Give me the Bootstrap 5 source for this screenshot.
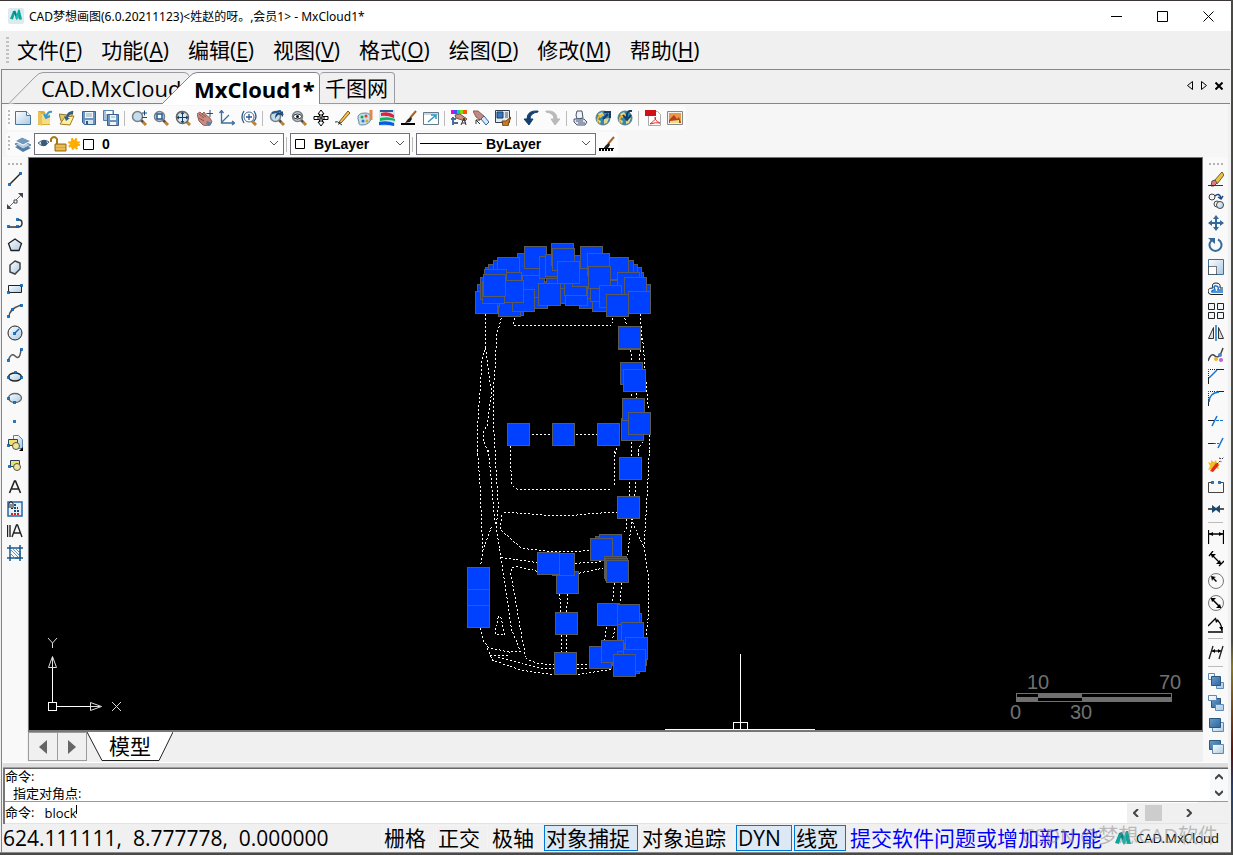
<!DOCTYPE html>
<html lang="zh-CN">
<head>
<meta charset="utf-8">
<meta name="viewport" content="width=device-width, initial-scale=1">
<title>CAD梦想画图 - MxCloud1*</title>
<link rel="stylesheet" href="https://cdn.jsdelivr.net/npm/bootstrap@5.3.0/dist/css/bootstrap.min.css">
<style>
:root{--face:#f0f0f0;--edge:#84848c;--ui:"Open Sans","Noto Sans CJK SC",sans-serif}
body{font-family:var(--ui);background:linear-gradient(#4c4a45,#4c4a45 75%,#8a7a20 78%,#5a1512 88%,#26406a 92%,#4c4a45);color:#000;font-size:13px;line-height:1;overflow:hidden}
.app-window{background:var(--face);margin:0 2px 2px 0;border-top:1px solid #3a3638;border-bottom:1px solid #888a90}
button{color:inherit}
svg{display:block;flex:none}
.titlebar{height:30px;font:12px "Noto Sans","Noto Sans CJK SC",sans-serif;background:#fff}
.titlebar span{margin-left:5px}
.caption-btn,.tool,.flat{border:0;background:none;padding:0;display:flex;align-items:center;justify-content:center;flex:none}
.caption-btn{width:46px;height:30px}
.menubar{height:38px;font-size:21px;padding-left:6px}
.menu-items{gap:19px;padding-left:8px}
.menubar a{color:#000;text-decoration:none;white-space:nowrap}
.menu-grip{width:3px;height:26px;background:repeating-linear-gradient(#c2c2c2 0 2px,transparent 2px 4px)}
.frame{border-left:1px solid var(--edge);margin-left:1px;padding-right:3px}
.doc-tabs{height:35px;border-top:1px solid var(--edge);border-bottom:1px solid var(--edge);margin:0 -2px 0 -1px;padding-top:2px}
.doc-tab{position:relative;isolation:isolate;height:32px;border:0;background:none;font-size:22px;line-height:30px;white-space:nowrap;padding:0;text-align:left}
.doc-tab svg{position:absolute;inset:0;z-index:0}
.doc-tab span{position:relative;z-index:1}
.tab-one{width:181px;margin-left:7px;padding-left:33px;margin-right:-27px}
.tab-two{width:158px;height:33px;font-weight:700;padding-left:32px}
.tab-three{width:75px;border:1px solid #9a9aa2;border-left:0;border-radius:4px 4px 0 0;padding-left:5px;font-size:21px}
.tab-tools{margin-right:3px}
.bars{background:#f6f6f6;padding:2px 0 0 4px;height:53px}
.bar{height:25px;background:#fbfbfb;width:max-content;border-radius:4px}
.bars .bar{height:24px;margin-bottom:2px}
.grip-v{width:2px;height:16px;margin:0 2px;background:repeating-linear-gradient(#bcbcbc 0 2px,transparent 2px 4px)}
.grip-h{height:2px;width:14px;margin:6px 0 3px;background:repeating-linear-gradient(90deg,#b4b4b4 0 2px,transparent 2px 4px)}
.tool{width:22px;height:22px}
.tool:hover{background:#d8e8f8}
.sep-v{width:1px;height:15px;background:#bcbcbc;margin:0 3px 0 2px}
.sep-h{height:1px;width:15px;background:#bcbcbc;margin:2px 0 3px}
.combo{height:22px;border:1px solid #70707a;background:#fff;position:relative;padding-left:3px}
.combo select{appearance:none;border:0;background:none;font:bold 14px "Liberation Sans","Noto Sans CJK SC",sans-serif;padding:0;flex:1;min-width:0;height:20px;color:#000;outline:0}
.combo .chev{position:absolute;right:4px;top:6px;pointer-events:none}
.combo-layer{width:250px}.combo-color{width:120px}.combo-line{width:180px}
.palette{width:25px;background:#f9f9f9;flex:none;margin-right:1px}
.palette.end{margin-right:0}
.canvas{background:#000;border:1px solid #77777b;border-bottom-width:2px;overflow:hidden;position:relative;min-height:0}
.canvas>svg{position:absolute}
.scale-bar{right:9px}
.sheet-tabs{height:30px}
.nav-btn{width:30px;height:29px;border:1px solid #9c9c9c;background:var(--face);padding:0;display:flex;align-items:center;justify-content:center}
.nav-btn+.nav-btn{margin-left:-1px}
.sheet{position:relative;width:86px;height:29px;border:0;background:none;font-size:21px;padding:0}
.sheet svg{position:absolute;inset:0}.sheet span{position:relative}
.splitter{height:6px;background:#dedede;border-top:1px solid #fff;border-bottom:1px solid #a0a0a0;margin-left:1px}
.command{background:#fff;border-left:2px solid #77777b;border-top:1px solid #666;margin-left:1px;font-size:13px}
.log{height:33px;border-bottom:1px solid #999}
.log p{margin:0;line-height:14px;height:17px;white-space:nowrap}
.prompt{height:22px;border-bottom:1px solid #e3e3e3}
.prompt input{border:0;outline:0;padding:0;margin-left:10px;background:none;font:13px "Open Sans",sans-serif;width:34px;min-width:0}
.caret{width:1px;height:9px;background:#000;margin:-6px 0 0 -2px}
.scroll-x{width:71px;background:var(--face);height:20px}
.scroll-end{width:30px;background:var(--face)}
.thumb{width:17px;height:16px;background:#cdcdcd}
.scroll-x .flat,.scroll-y .flat{width:18px;height:16px}
.statusbar{height:28px;font-size:21px;padding:1px 1px 1px 0}
.coords{width:376px;margin-left:1px;line-height:24px;white-space:pre}
.snaps{gap:2px;margin-left:3px}
.snap{height:26px;border:1px solid #f4f4f4;background:none;padding:0 7px 0 1px;line-height:24px;white-space:nowrap;flex:none;text-align:left}
.snap.on{background:#dce9f5;border-color:#0078d7}
.snap-dyn{width:56px}
.report{color:#00f;text-decoration:none;white-space:nowrap;line-height:24px}
.brand-name{font:13px/16px "Open Sans",sans-serif}
.watermark{position:absolute;right:10px;top:0;color:#8888;font-size:20px;line-height:24px;white-space:nowrap;pointer-events:none}
</style>
<script src="https://cdn.jsdelivr.net/npm/bootstrap@5.3.0/dist/js/bootstrap.bundle.min.js"></script>
</head>
<body class="vh-100 d-flex flex-column">
<svg width="0" height="0" class="position-absolute" aria-hidden="true">
<defs>
<linearGradient id="sky" x2="1" y2="1"><stop stop-color="#fff"/><stop offset="1" stop-color="#a9c9e4"/></linearGradient>
<linearGradient id="deep" x2="1" y2="1"><stop stop-color="#6d9bc7"/><stop offset="1" stop-color="#2c659e"/></linearGradient>
<symbol id="lens" viewBox="0 0 16 16"><path d="M10 10l5 5" stroke="#c08030" stroke-width="3"/><path d="M10 10l2 2" stroke="#444" stroke-width="2"/><circle cx="6.500" cy="6.500" r="5" fill="#c5dcec" stroke="#777f86" stroke-width="1.500"/></symbol>
<symbol id="down" viewBox="0 0 10 6"><path d="M1 1l4 4 4-4" fill="none" stroke="#555"/></symbol>
<symbol id="globe" viewBox="0 0 16 16"><circle cx="8" cy="8" r="7" fill="#3186b8" stroke="#5b7e83"/><path d="M3 4l4-2 2 3-4 3zM9 9l5-1-2 5-3 1zM2 9l4 2-1 3z" fill="#e5d68c"/><path d="M3 13Q1 5 9 5" fill="none" stroke="#f4b71e" stroke-width="1.500"/></symbol>
<symbol id="brush" viewBox="0 0 16 16"><path d="M15 1L9 8" stroke="#a5632b" stroke-width="2"/><path d="M10 7l-3 2-3 4 5-1 2-3z" fill="#222"/></symbol>
<symbol id="drop" viewBox="0 0 4 4"><path d="M.5.500h3v3h-3z" fill="#0c86e8" stroke="#05529c"/></symbol>
<symbol id="logo" viewBox="0 0 16 16"><path d="M0 13L4 3l3 1-3 10z" fill="#0aa69c"/><path d="M4 3l3-1 3 7-2 3z" fill="#09808a"/><path d="M7 12l4-11 2 1-2 10-2 3z" fill="#12bdb0"/><path d="M11 1h2l3 13h-4l-1-4z" fill="#0aa69c"/></symbol>
</defs>
</svg>
<div class="app-window d-flex flex-column flex-grow-1" style="min-height:0">
<header class="titlebar d-flex align-items-center ps-2">
 <svg width="16" height="16"><rect width="16" height="16" rx="2" fill="#dcebed"/><use href="#logo" x="2" y="1" width="12" height="12"/></svg>
 <span class="text-nowrap">CAD梦想画图(6.0.20211123)&lt;姓赵的呀。,会员1&gt; - MxCloud1*</span>
 <div class="ms-auto d-flex">
 <button class="caption-btn" aria-label="最小化"><svg width="11" height="11"><path d="M0 5.500h11" stroke="#000"/></svg></button>
 <button class="caption-btn" aria-label="最大化"><svg width="11" height="11"><path d="M.5.500h10v10H.5z" fill="none" stroke="#000"/></svg></button>
 <button class="caption-btn" aria-label="关闭"><svg width="11" height="11"><path d="M.5.500l10 10M10.500.500l-10 10" stroke="#000"/></svg></button>
 </div>
</header>
<nav class="menubar d-flex align-items-center" aria-label="主菜单">
 <span class="menu-grip"></span>
 <div class="menu-items d-flex"><a href="#">文件(<u>F</u>)</a><a href="#">功能(<u>A</u>)</a><a href="#">编辑(<u>E</u>)</a><a href="#">视图(<u>V</u>)</a><a href="#">格式(<u>O</u>)</a><a href="#">绘图(<u>D</u>)</a><a href="#">修改(<u>M</u>)</a><a href="#">帮助(<u>H</u>)</a></div>
</nav>
<div class="frame d-flex flex-column flex-grow-1" style="min-height:0">
<div class="doc-tabs d-flex align-items-start" role="tablist">
 <button class="doc-tab tab-one" role="tab" aria-selected="false"><svg width="181" height="32"><path d="M.5 32L27 5Q31 .5 35 .5H176Q180 .5 181 4" fill="#f0f0f0" stroke="#9a9aa2"/></svg><span>CAD.MxCloud</span></button>
 <button class="doc-tab tab-two" role="tab" aria-selected="true"><svg width="158" height="33"><path d="M0 32L27 5Q31 .5 35 .5H153Q157.500.500 157.500 5V33H0z" fill="#fff"/><path d="M0 32L27 5Q31 .5 35 .5H153Q157.500.500 157.500 5V32" fill="none" stroke="#84848c"/></svg><span>MxCloud1*</span></button>
 <button class="doc-tab tab-three" role="tab" aria-selected="false"><span>千图网</span></button>
 <div class="tab-tools ms-auto d-flex align-self-center mb-1">
 <button class="flat px-1" aria-label="上一个"><svg width="6" height="9"><path d="M5.500.500v8l-5-4z" fill="none" stroke="#000"/></svg></button>
 <button class="flat px-1" aria-label="下一个"><svg width="6" height="9"><path d="M.5.500v8l5-4z" fill="none" stroke="#000"/></svg></button>
 <button class="flat px-1" aria-label="关闭文档"><svg width="8" height="8"><path d="M.5.500l7 7M7.500.500l-7 7" stroke="#000" stroke-width="2"/></svg></button>
 </div>
</div>
<div class="bars">
 <div class="bar d-flex align-items-center" role="toolbar" aria-label="标准">
 <span class="grip-v"></span>
 <button class="tool" aria-label="新建"><svg width="16" height="16"><path d="M.5 1.500h11l4 4v9H.5z" fill="url(#sky)" stroke="#47749b"/><path d="M11.500 1.500v4h4" fill="#fff" stroke="#47749b"/></svg></button>
 <button class="tool" aria-label="打开"><svg width="16" height="16"><path d="M1 1h6l2 3h4v11H1z" fill="#d5ad3c"/><path d="M4 4h9v10H4z" fill="#f7dc81"/><path d="M1 1l4 3v12l-4-2z" fill="#ecc25b"/><path d="M15 2q-4-1-6 5M7 4l2 4 4-2" fill="none" stroke="#3999cc" stroke-width="2"/></svg></button>
 <button class="tool" aria-label="打开网络文件"><svg width="16" height="16"><path d="M0 4l8 1 6-4-3 13H3z" fill="#e9c759" stroke="#8c7432"/><path d="M1 14l5-7 9-1-4 9z" fill="#fff1a3" stroke="#a38027"/><path d="M14 1q-6 0-7 6l-2-1 2 5 4-3H9q1-4 5-4zM8 13l6 2" fill="#315e84"/></svg></button>
 <button class="tool" aria-label="保存"><svg width="16" height="16"><path d="M1.500 1.500h13v13h-11l-2-2z" fill="#6995c0" stroke="#39638f"/><path d="M4 2h8v6H4z" fill="#eef5fb"/><path d="M5 4h6M5 6h6" stroke="#91a9bd"/><path d="M4 10h8v4H4z" fill="#d8e4ec"/><path d="M5 11h2v3H5z" fill="#305a82"/></svg></button>
 <button class="tool" aria-label="另存为"><svg width="16" height="16"><path d="M.5.500h10v10H.5z" fill="#a5c1da" stroke="#537ea6"/><path d="M3 1h6v3H3z" fill="#fff"/><path d="M4.500 4.500h11v11h-11z" fill="#6995c0" stroke="#39638f"/><path d="M7 5h6v5H7zM7 12h6v3H7z" fill="#eef5fb"/><path d="M8 7h4" stroke="#91a9bd"/></svg></button>
 <span class="sep-v"></span>
 <button class="tool" aria-label="实时缩放"><svg width="16" height="16"><use href="#lens"/><path d="M11 3h5M13.500.500v5M11 7.500h5" stroke="#174a79"/></svg></button>
 <button class="tool" aria-label="窗口缩放"><svg width="16" height="16"><use href="#lens"/><path d="M4 4h5v5H4z" fill="#fff" stroke="#225b94" stroke-width="1.500"/></svg></button>
 <button class="tool" aria-label="全部缩放"><svg width="16" height="16"><use href="#lens"/><circle cx="7.500" cy="7.500" r="6" fill="#dbe8f0" stroke="#666" stroke-width="1.500"/><path d="M7.500 2.500v10M2.500 7.500h10M6 4l1.500-2L9 4M6 11l1.500 2L9 11M4 6L2 7.500 4 9M11 6l2 1.500L11 9" fill="none" stroke="#183c60"/></svg></button>
 <button class="tool" aria-label="平移"><svg width="16" height="16"><path d="M0 4l3-2 2 2 2-2 2 3 4 3 2 4-4 4-5-1-4-4z" fill="#c98c82" stroke="#98605a"/><path d="M2 4l5 4M5 4l4 3M2 8l5 3" stroke="#8e4e4a"/><path d="M13 0v7M9.500 3.500h6.500" stroke="#214d79"/><path d="M10 11l5 2-2 3-4-2z" fill="#607fa0"/></svg></button>
 <button class="tool" aria-label="坐标系"><svg width="16" height="16"><path d="M2.500 1v12H15M.5 3l2-2.500 2 2.500M13 11l2.500 2-2.500 2M3 12l7-7" fill="none" stroke="#3e719f" stroke-width="1.300"/></svg></button>
 <button class="tool" aria-label="动态缩放"><svg width="16" height="16"><path d="M11 11l4 4" stroke="#c08030" stroke-width="3"/><circle cx="8" cy="7" r="5" fill="#fff" stroke="#496e91"/><path d="M8 4v6M5 7h6M3 1Q-1 7 3 13M13 1q4 6 0 10" fill="none" stroke="#2c5a87" stroke-width="1.300"/></svg></button>
 <span class="sep-v"></span>
 <button class="tool" aria-label="上一视图"><svg width="16" height="16"><use href="#lens"/><path d="M14 1v6l-2-2q-3-2-6 4 0-8 6-6z" fill="#1c426c"/><path d="M3 3l8-2 3 4" fill="none" stroke="#245787" stroke-width="2"/></svg></button>
 <button class="tool" aria-label="查看对象"><svg width="16" height="16"><use href="#lens"/><ellipse cx="6.500" cy="6.500" rx="4" ry="2.500" fill="#fff" stroke="#333"/><circle cx="6.500" cy="6.500" r="1.500" fill="#111"/></svg></button>
 <button class="tool" aria-label="移动视图"><svg width="16" height="16"><path d="M8 0l3 4H9.500v2.500H15v3H9.500V12H11l-3 4-3-4h1.500V9.500H1v-3h5.500V4H5z" fill="#fff" stroke="#000"/><path d="M8 4v8M4 8h8" stroke="#000"/></svg></button>
 <button class="tool" aria-label="铅笔"><svg width="16" height="16"><path d="M4 12L13 1l2 2L6 13z" fill="#f3c34b" stroke="#80551f"/><path d="M0 12q3-1 4 1l3 2" fill="none" stroke="#333"/><path d="M4 12l-1 3 3-2z" fill="#333"/></svg></button>
 <button class="tool" aria-label="调色板"><svg width="16" height="16"><path d="M1 9Q0 3 8 3q6 0 6 5-1 7-9 7-4 0-3-3z" fill="#c7dfe9" stroke="#668a9b"/><circle cx="5" cy="7" r="1.500" fill="#16a34a"/><circle cx="9" cy="6" r="1.500" fill="#e53535"/><circle cx="6" cy="11" r="1.500" fill="#247bd3"/><circle cx="10" cy="11" r="1.500" fill="#dda727"/><path d="M14 0v10" stroke="#d98b54" stroke-width="3"/></svg></button>
 <button class="tool" aria-label="图层颜色"><svg width="16" height="16"><path d="M0 0h16v16H0z" fill="#d6e5ed"/><path d="M1 0h13v2H1z" fill="#275d98"/><path d="M2 3q8-2 13 2v3Q8 5 2 6z" fill="#e31e3f"/><path d="M1 8q9-2 15 1v2q-7-2-15 0z" fill="#0bb85b"/><path d="M0 12q8-2 15 1v3q-7-2-15-1z" fill="#075ce3"/></svg></button>
 <button class="tool" aria-label="线宽设置"><svg width="16" height="16"><use href="#brush"/><path d="M0 14h14" stroke="#000" stroke-width="2"/></svg></button>
 <button class="tool" aria-label="全屏"><svg width="16" height="16"><path d="M.5 2.500h15v12H.5z" fill="#fff" stroke="#667986"/><path d="M1 3h14v2H1z" fill="#c9d7df"/><path d="M5 12l7-6M8 5h5v4" fill="none" stroke="#2699cf" stroke-width="1.500"/></svg></button>
 <span class="sep-v"></span>
 <button class="tool" aria-label="特性"><svg width="16" height="16"><path d="M0 0h3v4H0z" fill="#f0c"/><path d="M3 0h3v4H3z" fill="#35f"/><path d="M6 0h3v4H6z" fill="#0cc"/><path d="M9 0h3v4H9z" fill="#8d0"/><path d="M12 0h4v4h-4z" fill="#f50"/><path d="M4 5l5-1 7 5-2 2-9-3z" fill="#c69182" stroke="#835244"/><path d="M2 7v8M0 9h5M1 13h6" stroke="#4b6f94" stroke-width="2"/><path d="M10 15l3-7 2 7M11 13h4" fill="none" stroke="#333"/></svg></button>
 <button class="tool" aria-label="快速选择"><svg width="16" height="16"><path d="M0 1l5 0 6 5-4 4-4-3z" fill="#c08a84" stroke="#84635b"/><path d="M8 9l3-3 5 6-3 3z" fill="#d4e8f7" stroke="#326695"/><path d="M3 10l4 4M3 14v-4h4" fill="none" stroke="#333"/></svg></button>
 <button class="tool" aria-label="设计中心"><svg width="16" height="16"><path d="M.5.500h14v12H.5z" fill="#dfeaf2" stroke="#333f50"/><path d="M2 2h6v6H2z" fill="#3579ba" stroke="#173d66"/><path d="M10 3h3M10 5h3M10 7h3" stroke="#555"/><path d="M16 7l-5 4-4 0 1 5h5l1-4z" fill="#c77927" stroke="#744414"/></svg></button>
 <span class="sep-v"></span>
 <button class="tool" aria-label="撤销"><svg width="16" height="16"><path d="M15 1Q4 0 4 9H1l5 6 4-6H7q0-6 8-7z" fill="#133f6d" stroke="#133f6d"/></svg></button>
 <button class="tool" aria-label="重做"><svg width="16" height="16"><path d="M1 1q11-1 11 8h3l-5 6-4-6h3q0-6-8-7z" fill="#b9b9b9" stroke="#b9b9b9"/></svg></button>
 <span class="sep-v"></span>
 <button class="tool" aria-label="打印"><svg width="16" height="16"><path d="M4 1h5l1 7-6 1-1-4z" fill="#f2f4f8" stroke="#46546f"/><path d="M1 9h10l3 3-2 3H4l-3-3z" fill="#dfe5f0" stroke="#46546f"/><path d="M3 11h7M5 13h7" stroke="#46546f"/></svg></button>
 <button class="tool" aria-label="上传"><svg width="16" height="16"><use href="#globe"/><path d="M8 9l5-5M9 2h6v6" fill="none" stroke="#163d64" stroke-width="2"/></svg></button>
 <button class="tool" aria-label="下载"><svg width="16" height="16"><use href="#globe"/><path d="M15 1q-6-1-5 7M6 5l4 5 4-5" fill="none" stroke="#163d64" stroke-width="2"/></svg></button>
 <span class="sep-v"></span>
 <button class="tool" aria-label="输出PDF"><svg width="16" height="16"><path d="M3.500 1.500h9l3 3v11h-12z" fill="#fff" stroke="#aaa"/><path d="M0 0h11v6H0z" fill="#cf1117"/><path d="M5 14q8-6 5-7-1 3 5 6-4-1-10 1" fill="none" stroke="#dc3037"/></svg></button>
 <button class="tool" aria-label="输出图片"><svg width="16" height="16"><path d="M.5 1.500h15v13H.5z" fill="#f3f3f3" stroke="#888"/><path d="M2 3h12v10H2z" fill="#e79b42"/><path d="M2 10l5-5 3 4 2-2 2 6H2z" fill="#b83e22"/><path d="M3 11l9-1v3H3z" fill="#eddf86"/></svg></button>
 </div>
 <div class="bar d-flex align-items-center" role="toolbar" aria-label="图层和特性">
 <span class="grip-v"></span>
 <button class="tool" aria-label="图层管理"><svg width="16" height="16"><path d="M0 11l7-3 9 4-8 4z" fill="#517da5"/><path d="M0 8l7-3 9 4-8 4z" fill="#b8cedd" stroke="#517da5"/><path d="M0 5l7-4 9 4-8 4z" fill="#7299bd" stroke="#fff"/></svg></button>
 <div class="combo combo-layer d-flex align-items-center">
 <svg width="60" height="16"><path d="M0 7q6-5 11-1-5 7-11 1z" fill="#d0e2ec" stroke="#55667a"/><circle cx="6" cy="7" r="3" fill="#345b7c"/><path d="M13 6V3q3-4 6 0v5" fill="none" stroke="#a77818" stroke-width="2"/><path d="M17 8h11v7H17z" fill="#d9a735" stroke="#9b6c13"/><path d="M18 10h9M18 13h9" stroke="#f2d179"/><circle cx="36" cy="8" r="5" fill="none" stroke="#f9a800" stroke-width="2" stroke-dasharray="2 2"/><circle cx="36" cy="8" r="4.500" fill="#ffae00"/><path d="M45.500 3.500h10v10h-10z" fill="#fff" stroke="#000"/></svg>
 <select aria-label="图层" class="ps-1"><option>0</option></select><svg class="chev" width="10" height="8"><use href="#down" width="10" height="6"/></svg></div>
 <span class="sep-v"></span>
 <div class="combo combo-color d-flex align-items-center"><svg width="12" height="12"><path d="M1.500 1.500h9v9h-9z" fill="#fff" stroke="#000"/></svg>
 <select aria-label="颜色" class="ps-2"><option>ByLayer</option></select><svg class="chev" width="10" height="8"><use href="#down" width="10" height="6"/></svg></div>
 <span class="sep-v"></span>
 <div class="combo combo-line d-flex align-items-center"><svg width="62" height="2"><path d="M0 .5h62" stroke="#000"/></svg>
 <select aria-label="线型" class="ps-1"><option>ByLayer</option></select><svg class="chev" width="10" height="8"><use href="#down" width="10" height="6"/></svg></div>
 <button class="tool" aria-label="线型管理"><svg width="16" height="16"><use href="#brush"/><path d="M0 12.500h15" stroke="#000"/><path d="M0 14h15" stroke="#000" stroke-width="2" stroke-dasharray="2 1"/></svg></button>
 </div>
</div>
<main class="d-flex flex-grow-1" style="min-height:0">
 <div class="palette d-flex flex-column align-items-center" role="toolbar" aria-label="绘图">
 <span class="grip-h"></span>
 <button class="tool" aria-label="直线"><svg width="16" height="16"><path d="M2 14L14 2" stroke="#222" stroke-width="1.500"/><use href="#drop" x="1" y="12" width="3" height="3"/><use href="#drop" x="12" y="1" width="3" height="3"/></svg></button>
 <button class="tool" aria-label="构造线"><svg width="16" height="16"><path d="M2 14L14 2" stroke="#667"/><path d="M0 16v-5l5 5zM16 0h-5l5 5z" fill="#445"/><path d="M7 7h3v3H7z" fill="#fff" stroke="#445"/></svg></button>
 <button class="tool" aria-label="多段线"><svg width="16" height="16"><path d="M1 12h10q4 0 4-4t-5-3" fill="none" stroke="#333" stroke-width="1.500"/><use href="#drop" y="10" width="3" height="3"/><use href="#drop" x="9" y="10" width="3" height="3"/><use href="#drop" x="9" y="3" width="3" height="3"/></svg></button>
 <button class="tool" aria-label="正多边形"><svg width="16" height="16"><path d="M8 2l6.500 4.500-2.500 7H4L1.500 6.500z" fill="url(#sky)" stroke="#222" stroke-width="1.300"/></svg></button>
 <button class="tool" aria-label="多边形"><svg width="16" height="16"><path d="M8 2l5 2v6l-5 5-5-2 0-7z" fill="url(#sky)" stroke="#444" stroke-width="1.500"/></svg></button>
 <button class="tool" aria-label="矩形"><svg width="16" height="16"><path d="M1.500 4.500h13v7h-13z" fill="url(#sky)" stroke="#222"/><use href="#drop" y="10" width="3" height="3"/><use href="#drop" x="13" y="3" width="3" height="3"/></svg></button>
 <button class="tool" aria-label="圆弧"><svg width="16" height="16"><path d="M2 14Q2 6 14 2" fill="none" stroke="#555" stroke-width="1.500"/><use href="#drop" y="12" width="3" height="3"/><use href="#drop" x="4" y="5" width="3" height="3"/><use href="#drop" x="13" y="1" width="3" height="3"/></svg></button>
 <button class="tool" aria-label="圆"><svg width="16" height="16"><circle cx="8" cy="8" r="7" fill="url(#sky)" stroke="#222"/><path d="M8 8l4-4" stroke="#16c" stroke-width="1.500"/><use href="#drop" x="6" y="7" width="3" height="3"/></svg></button>
 <button class="tool" aria-label="样条曲线"><svg width="16" height="16"><path d="M1 14q3-9 7-5 5 5 6-7" fill="none" stroke="#555" stroke-width="1.500"/><use href="#drop" y="12" width="3" height="3"/><use href="#drop" x="13" y="1" width="3" height="3"/></svg></button>
 <button class="tool" aria-label="椭圆"><svg width="16" height="16"><ellipse cx="8" cy="8" rx="6.500" ry="4" fill="url(#sky)" stroke="#222" stroke-width="1.300"/><use href="#drop" y="7" width="3" height="3"/><use href="#drop" x="7" y="2" width="3" height="3"/><use href="#drop" x="13" y="7" width="3" height="3"/></svg></button>
 <button class="tool" aria-label="椭圆弧"><svg width="16" height="16"><ellipse cx="8" cy="7" rx="6.500" ry="4.500" fill="url(#sky)" stroke="#666" stroke-width="1.300"/><use href="#drop" y="6" width="3" height="3"/><use href="#drop" x="6" y="10" width="3" height="3"/></svg></button>
 <button class="tool" aria-label="点"><svg width="16" height="16"><use href="#drop" x="6" y="7" width="3" height="3"/></svg></button>
 <button class="tool" aria-label="插入块"><svg width="16" height="16"><path d="M6.500.500h5l4 4v9h-9z" fill="url(#sky)" stroke="#5481ad"/><path d="M1.500 4.500h9v6h-9z" fill="#f4df6e" stroke="#24435c"/><circle cx="9" cy="11" r="3.500" fill="#eee49c" stroke="#555"/><use href="#drop" y="9" width="3" height="3"/><path d="M16 12v4h-4z"/></svg></button>
 <button class="tool" aria-label="创建块"><svg width="16" height="16"><path d="M3.500 3.500h9v6h-9z" fill="#f4df6e" stroke="#24435c"/><circle cx="10" cy="10" r="3.500" fill="#eee49c" stroke="#555"/><use href="#drop" x="1" y="8" width="3" height="3"/></svg></button>
 <button class="tool" aria-label="单行文字"><svg width="16" height="16"><path d="M2.500 14L7.500 2h1l5 12M5 10h7" fill="none" stroke="#222" stroke-width="1.600"/></svg></button>
 <button class="tool" aria-label="图案"><svg width="16" height="16"><path d="M1 1h14v14H1z" fill="#e6f0f8" stroke="#2668a6" stroke-width="1.500"/><path d="M4 13h9" stroke="#d31c24" stroke-width="2" stroke-dasharray="2 1"/><path d="M7 4h2M7 7h4M7 10h6" stroke="#1c4b70" stroke-width="2" stroke-dasharray="2 1"/><path d="M2 7V2q2-3 4 0v5q-1 2-2 0V3" fill="none" stroke="#222"/></svg></button>
 <button class="tool" aria-label="多行文字"><svg width="16" height="16"><path d="M.5 2v12M3 2v12M5 14l4.500-12h1L15 14M7 10h7" fill="none" stroke="#222" stroke-width="1.400"/></svg></button>
 <button class="tool" aria-label="填充"><svg width="16" height="16"><path d="M3 0v16M13 0v16M0 3h16M0 13h16" stroke="#1d588d" stroke-width="1.500"/><path d="M3 4l9 9M6 4l6 6M9 4l4 4M3 8l5 5" stroke="#5c98ca"/><path d="M13 6v7h-5" fill="none" stroke="#1d588d"/></svg></button>
 </div>
 <section class="d-flex flex-column flex-grow-1" style="min-width:0">
 <div class="canvas flex-grow-1">
 <svg class="top-0 start-0" width="100%" height="100%" shape-rendering="crispEdges" role="img" aria-label="汽车俯视图">
 <defs><rect id="g" x=".5" y=".5" width="22" height="22" fill="#0040ff" stroke="#5b5b5b"/></defs>
 <g transform="translate(-29 -158)">
 <g fill="none" stroke="#fff" stroke-width="3" stroke-dasharray="6 6">
 <path transform="translate(460 235) scale(.33333)" d="M77 236L76 340 66 372 60 470 52 580V660M77 340L90 440 95 470 82 570 70 590 72 620 85 655M124 250L110 300 105 400 100 470V560L106 655M163 250L160 273H205L300 271H410L452 273 458 262V244M151 632V660M469 640L466 660M205 598H410M494 250L500 270M512 345L516 380M516 478V490M541 237L545 300 537 380M530 475V490M548 310L560 460 565 525M568 600V660M514 620V660M548 620L537 640V660"/>
 <path transform="translate(460 450) scale(.33333)" d="M52 0L60 100 65 230 69 300 62 345M85 0L92 70 103 200 106 225M106 0L108 60 115 170 112 200 108 230 130 370 155 540 182 605M151 0L154 95Q158 115 175 118H445Q462 115 465 95V0M568 0L563 110 556 230 552 290 565 380V500L558 560M514 0V20M537 0V20M508 95V140M528 95L524 140M516 205L520 225 552 290M516 205L514 230 508 270 503 315M499 208V240L485 252M463 400L458 460M485 400L480 460M440 530L434 570M465 535L458 565M133 187L190 190 260 196H340L400 190 470 187M124 195L122 240 185 295 270 304 330 306 390 301M95 230L69 300M122 322L232 338M232 364L170 349 154 355 152 370 165 440 180 530 197 622M345 340L430 335M345 372L430 354M299 432L303 487M323 432L320 487M305 555V607M320 555L318 607M115 500L107 540V555H135L122 500H115M62 535L68 570 85 592 140 605H182M82 595L97 630 180 660 270 673H360L460 657M90 618H140L150 605M115 622L240 655H283M350 656H400M197 625L230 640 283 645M350 645L390 642"/>
 </g>
 <use href="#g" x="485" y="267"/><use href="#g" x="488" y="264"/><use href="#g" x="493" y="260"/><use href="#g" x="508" y="266"/><use href="#g" x="525" y="286"/><use href="#g" x="501" y="293"/><use href="#g" x="543" y="281"/><use href="#g" x="546" y="266"/><use href="#g" x="600" y="262"/><use href="#g" x="621" y="272"/><use href="#g" x="619" y="267"/><use href="#g" x="615" y="264"/><use href="#g" x="611" y="260"/><use href="#g" x="560" y="255"/><use href="#g" x="579" y="286"/><use href="#g" x="592" y="289"/><use href="#g" x="577" y="276"/><use href="#g" x="565" y="283"/><use href="#g" x="564" y="273"/><use href="#g" x="572" y="264"/><use href="#g" x="590" y="279"/><use href="#g" x="602" y="280"/>
 <use href="#g" x="517" y="253"/><use href="#g" x="497" y="257"/><use href="#g" x="522" y="275"/><use href="#g" x="524" y="246"/><use href="#g" x="539" y="256"/><use href="#g" x="545" y="254"/><use href="#g" x="551" y="243"/><use href="#g" x="552" y="248"/><use href="#g" x="557" y="261"/><use href="#g" x="538" y="283"/>
 <use href="#g" x="580" y="246"/><use href="#g" x="606" y="257"/><use href="#g" x="587" y="253"/><use href="#g" x="588" y="266"/><use href="#g" x="617" y="272"/><use href="#g" x="628" y="284"/><use href="#g" x="624" y="277"/><use href="#g" x="599" y="285"/><use href="#g" x="606" y="294"/><use href="#g" x="628" y="291"/>
 <use href="#g" x="498" y="294"/><use href="#g" x="512" y="289"/><use href="#g" x="477" y="284"/><use href="#g" x="475" y="291"/><use href="#g" x="480" y="277"/><use href="#g" x="499" y="272"/><use href="#g" x="484" y="269"/><use href="#g" x="501" y="280"/><use href="#g" x="482" y="281"/><use href="#g" x="483" y="274"/>
 <use href="#g" x="618" y="327"/><use href="#g" x="618" y="326"/><use href="#g" x="620" y="362"/><use href="#g" x="623" y="369"/><use href="#g" x="621" y="418"/><use href="#g" x="622" y="398"/><use href="#g" x="628" y="412"/><use href="#g" x="507" y="423"/><use href="#g" x="552" y="423"/><use href="#g" x="597" y="423"/>
 <use href="#g" x="619" y="457"/><use href="#g" x="617" y="496"/><use href="#g" x="595" y="536"/><use href="#g" x="599" y="534"/><use href="#g" x="590" y="538"/><use href="#g" x="604" y="556"/><use href="#g" x="605" y="558"/><use href="#g" x="606" y="560"/><use href="#g" x="556" y="571"/><use href="#g" x="552" y="553"/><use href="#g" x="537" y="552"/><use href="#g" x="555" y="612"/><use href="#g" x="554" y="652"/><use href="#g" x="467" y="567"/><use href="#g" x="467" y="589"/><use href="#g" x="467" y="605"/>
 <use href="#g" x="597" y="603"/><use href="#g" x="619" y="613"/><use href="#g" x="617" y="604"/><use href="#g" x="617" y="624"/><use href="#g" x="621" y="622"/><use href="#g" x="612" y="643"/><use href="#g" x="624" y="643"/><use href="#g" x="625" y="637"/><use href="#g" x="589" y="646"/><use href="#g" x="601" y="640"/><use href="#g" x="617" y="651"/><use href="#g" x="623" y="649"/><use href="#g" x="613" y="654"/>
 <path d="M740.500 654v76M665 729.500h150M733.500 731v-9h14v9" fill="none" stroke="#fff"/>
 </g></svg>
 <svg class="start-0 bottom-0 ms-3" width="80" height="98" role="img" aria-label="坐标轴"><path d="M3.500 70.500h8v8h-8zM7.500 70V31M12 74.500h35" fill="none" stroke="#fff" shape-rendering="crispEdges"/><path d="M3.500 35.500l4-11 4 11zM45.500 70.500v8l11-4zM7.500 25v10M46 74.500h9M67 70l9 9M76 70l-9 9M3 6l4.500 5L12 6M7.500 11v5" fill="none" stroke="#ddd"/></svg>
 <svg class="scale-bar bottom-0" width="184" height="59" fill="#707070" role="img" aria-label="比例尺" font-family="Liberation Sans, sans-serif" font-size="20"><text x="18" y="18">10</text><text x="150" y="18">70</text><text x="1" y="48">0</text><text x="61" y="48">30</text><path d="M7 22h156v9H7z"/><path d="M8 23h21v3H8zM73 23h89v3H73zM29 27h44v3H29z" fill="#000"/></svg>
 </div>
 <div class="sheet-tabs d-flex align-items-start">
 <button class="nav-btn" aria-label="上一布局"><svg width="8" height="14"><path d="M8 0v14L0 7z" fill="#666"/></svg></button><button class="nav-btn" aria-label="下一布局"><svg width="8" height="14"><path d="M0 0v14l8-7z" fill="#666"/></svg></button>
 <button class="sheet"><svg width="86" height="29"><path d="M0 0l15 28.500h57L86 0" fill="#fff" stroke="#222"/></svg><span>模型</span></button>
 </div>
 </section>
 <div class="palette end d-flex flex-column align-items-center" role="toolbar" aria-label="修改">
 <span class="grip-h"></span>
 <button class="tool" aria-label="删除"><svg width="16" height="16"><path d="M6 10L14 1l2 3-7 9z" fill="#f0c437" stroke="#6a5c37"/><path d="M4 10l3-1 2 3-3 3H3z" fill="#df7b7b" stroke="#555"/><path d="M0 14.500h15" stroke="#333"/></svg></button>
 <button class="tool" aria-label="复制"><svg width="16" height="16"><circle cx="4" cy="4" r="3" fill="#eef5fb" stroke="#444"/><circle cx="9" cy="11" r="3" fill="#eef5fb" stroke="#444"/><circle cx="12" cy="12" r="3.500" fill="url(#sky)" stroke="#444"/><path d="M7 3q4-4 6 2M10 4l3 2 2-3" fill="none" stroke="#164c83" stroke-width="1.500"/></svg></button>
 <button class="tool" aria-label="移动"><svg width="16" height="16"><path d="M8 0l3 4H9v3h3V5l4 3-4 3V9H9v3h2l-3 4-3-4h2V9H4v2L0 8l4-3v2h3V4H5z" fill="#34699b"/></svg></button>
 <button class="tool" aria-label="旋转"><svg width="16" height="16"><path d="M10 2.500a6 6 0 1 1-5 0" fill="none" stroke="#34699b" stroke-width="2"/><path d="M0 1h7v6z" fill="#34699b"/></svg></button>
 <button class="tool" aria-label="缩放"><svg width="16" height="16"><path d="M.5.500h15v15H.5z" fill="url(#sky)" stroke="#3d709d"/><path d="M.5 7.500h8v8h-8z" fill="#fff" stroke="#000" stroke-dasharray="1 1"/></svg></button>
 <button class="tool" aria-label="偏移"><svg width="16" height="16"><path d="M15 13.500H3Q0 13 0 10t5-3Q3 2 8 2t4 5h3" fill="none" stroke="#222"/><path d="M15 11H4q-1-2 3-2Q5 4 8 5q3 0 2 4h5" fill="none" stroke="#1674d0" stroke-width="1.500"/></svg></button>
 <button class="tool" aria-label="阵列"><svg width="16" height="16"><path d="M.5.500h6v6h-6zM9.500.500h6v6h-6zM.5 9.500h6v6h-6zM9.500 9.500h6v6h-6z" fill="#eef5fb" stroke="#222"/></svg></button>
 <button class="tool" aria-label="镜像"><svg width="16" height="16"><path d="M5.500 2.500v11h-5zM10.500 2.500v11h5z" fill="#ddd" stroke="#333"/><path d="M8 0v16" stroke="#1674d0" stroke-width="1.500"/></svg></button>
 <button class="tool" aria-label="编辑"><svg width="16" height="16"><path d="M0 14q3-9 7-5t8-8" fill="none" stroke="#444" stroke-width="1.500"/><circle cx="8" cy="12" r="2" fill="#e6b932"/><circle cx="12" cy="8" r="2" fill="#4a83c9"/><circle cx="13" cy="13" r="2" fill="#c85cd6"/></svg></button>
 <button class="tool" aria-label="倒角"><svg width="16" height="16"><path d="M.5 15V9M8 .5h8" stroke="#222"/><path d="M.5 9V.5h8" fill="none" stroke="#222" stroke-dasharray="1 1"/><path d="M1 9l8-8" stroke="#1674d0" stroke-width="1.500"/></svg></button>
 <button class="tool" aria-label="圆角"><svg width="16" height="16"><path d="M.5 15V9M9 .5h7" stroke="#222"/><path d="M.5 9V.5h8" fill="none" stroke="#222" stroke-dasharray="1 1"/><path d="M1 11Q1 2 11 1" fill="none" stroke="#1674d0" stroke-width="1.500"/></svg></button>
 <button class="tool" aria-label="修剪"><svg width="16" height="16"><path d="M0 7.500h6" stroke="#222"/><path d="M4 13l5-10" stroke="#1674d0" stroke-width="1.500"/><path d="M8 7.500h8" stroke="#1674d0" stroke-dasharray="3 1"/></svg></button>
 <button class="tool" aria-label="延伸"><svg width="16" height="16"><path d="M0 8.500h6" stroke="#222"/><path d="M10 13l5-10" stroke="#1674d0" stroke-width="1.500"/><path d="M6 8.500h6" stroke="#1674d0" stroke-dasharray="2 1"/></svg></button>
 <button class="tool" aria-label="分解"><svg width="16" height="16"><path d="M0 5l3 1V3l3 2 2-2 1 3 3 1-2 2 1 3-3-1-3 4-1-3-4 1 2-4z" fill="#f6bc20"/><path d="M2 14l6-8 3 2-6 7z" fill="#e42a19"/><path d="M9 7l3-3 2 1M11 1l3 1 2-2" fill="none" stroke="#333" stroke-dasharray="2 1"/></svg></button>
 <button class="tool" aria-label="打断"><svg width="16" height="16"><path d="M4 3.500H.5v10h15v-10H12" fill="none" stroke="#444"/><use href="#drop" x="3" y="2" width="3" height="3"/><use href="#drop" x="10" y="2" width="3" height="3"/></svg></button>
 <button class="tool" aria-label="合并"><svg width="16" height="16"><path d="M0 8h5M11 8h5" stroke="#222" stroke-width="1.500"/><path d="M4 4l4 3 4-3v8L8 9l-4 3z" fill="#1c4970"/></svg></button>
 <span class="sep-h"></span>
 <button class="tool" aria-label="线性标注"><svg width="16" height="16"><path d="M.5 1v14M15.500 1v14M1 5h14" stroke="#000" stroke-width="1.300"/><path d="M1 5l4-2v4zM15 5l-4-2v4z"/></svg></button>
 <button class="tool" aria-label="对齐标注"><svg width="16" height="16"><path d="M1 5l4-5M11 15l5-5M3 3l10 10" stroke="#000" stroke-width="1.300"/><path d="M3 3h5L4 7zM13 13H8l4-4z"/></svg></button>
 <button class="tool" aria-label="半径标注"><svg width="16" height="16"><circle cx="8" cy="8" r="7.500" fill="none" stroke="#777"/><path d="M3 3l5 1-2 1 3 3-1 1-3-3-1 2z"/></svg></button>
 <button class="tool" aria-label="直径标注"><svg width="16" height="16"><circle cx="8" cy="8" r="7.500" fill="none" stroke="#777"/><path d="M3 3l10 10" stroke="#000" stroke-width="1.500"/><path d="M3 3h5L4 7zM13 13H8l4-4z"/></svg></button>
 <button class="tool" aria-label="角度标注"><svg width="16" height="16"><path d="M0 15h15M0 9l8-8M9 3q5 4 5 11" fill="none" stroke="#000" stroke-width="1.300"/><path d="M7 2l4 1-3 3zM14 14l-3-4h4z"/></svg></button>
 <span class="sep-h"></span>
 <button class="tool" aria-label="编辑标注"><svg width="16" height="16"><path d="M1 14L5 1M11 14l4-13M4 6h9" fill="none" stroke="#222" stroke-width="1.300"/><path d="M4 6l3-2v4zM13 6l-3-2v4z"/></svg></button>
 <span class="sep-h"></span>
 <button class="tool" aria-label="前置"><svg width="16" height="16"><path d="M.5.500h6v6h-6zM8.500 9.500h7v6h-7z" fill="url(#sky)" stroke="#5b8ab7"/><path d="M3.500 3.500h9v9h-9z" fill="url(#deep)" stroke="#285780"/></svg></button>
 <button class="tool" aria-label="后置"><svg width="16" height="16"><path d="M3.500 3.500h9v9h-9z" fill="url(#deep)" stroke="#285780"/><path d="M.5.500h8v5h-8zM7.500 9.500h8v6h-8z" fill="url(#sky)" stroke="#5b8ab7"/></svg></button>
 <button class="tool" aria-label="置于对象之上"><svg width="16" height="16"><path d="M4.500 5.500h11v9h-11z" fill="url(#sky)" stroke="#5b8ab7"/><path d="M1.500 1.500h11v9h-11z" fill="url(#deep)" stroke="#285780"/></svg></button>
 <button class="tool" aria-label="置于对象之下"><svg width="16" height="16"><path d="M1.500 1.500h11v9h-11z" fill="url(#deep)" stroke="#285780"/><path d="M4.500 5.500h11v9h-11z" fill="url(#sky)" stroke="#5b8ab7"/></svg></button>
 </div>
</main>
<div class="splitter"></div>
<section class="command">
 <div class="log d-flex justify-content-between"><div><p>命令:</p><p class="ps-2">指定对角点:</p></div>
 <div class="scroll-y bg-light"><button class="flat" aria-label="向上"><svg width="8" height="6"><path d="M0 5l4-4 4 4" fill="none" stroke="#444" stroke-width="2"/></svg></button><button class="flat" aria-label="向下"><svg width="8" height="6"><path d="M0 1l4 4 4-4" fill="none" stroke="#444" stroke-width="2"/></svg></button></div></div>
 <div class="prompt d-flex align-items-center"><label for="cmd">命令:</label><input id="cmd" value="block"><span class="caret"></span>
 <div class="scroll-x d-flex align-items-center ms-auto"><button class="flat" aria-label="向左"><svg width="6" height="8"><path d="M5 0L1 4l4 4" fill="none" stroke="#444" stroke-width="2"/></svg></button><span class="thumb"></span><button class="flat ms-auto" aria-label="向右"><svg width="6" height="8"><path d="M1 0l4 4-4 4" fill="none" stroke="#444" stroke-width="2"/></svg></button></div><div class="scroll-end align-self-stretch"></div></div>
</section>
<footer class="statusbar d-flex align-items-center position-relative">
 <div class="coords flex-shrink-0">624.111111,  8.777778,  0.000000</div>
 <div class="snaps d-flex">
 <button class="snap">栅格</button><button class="snap">正交</button><button class="snap">极轴</button><button class="snap on">对象捕捉</button><button class="snap">对象追踪</button><button class="snap snap-dyn on">DYN</button><button class="snap on">线宽</button></div>
 <a href="#" class="report ms-1">提交软件问题或增加新功能</a>
 <div class="brand-name d-flex align-items-center ms-auto gap-1 pe-2"><svg width="18" height="16"><use href="#logo" width="18" height="16"/></svg>CAD.MxCloud</div>
 <span class="watermark">CSDN @梦想CAD软件</span>
</footer>
</div>
</div>
</body>
</html>
